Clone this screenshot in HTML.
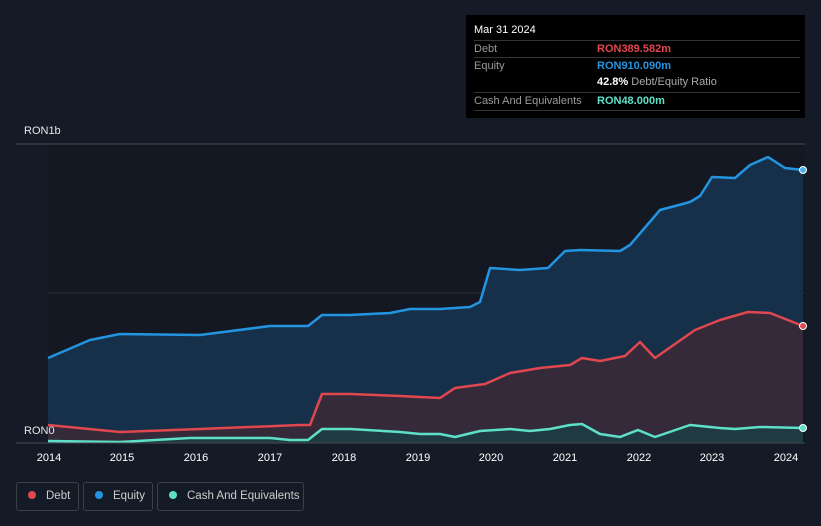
<!DOCTYPE html>
<html><head><style>
html,body{margin:0;width:821px;height:526px;background:#151b26;font-family:"Liberation Sans",sans-serif;overflow:hidden;position:relative}
.tip{position:absolute;left:466px;top:15px;width:339px;height:103px;background:#000;color:#fff;font-size:11px}
.row{position:absolute;left:8px;width:326px;border-top:1px solid #333;height:17px;line-height:17px}
.row span.l{color:#9a9a9a;position:absolute;left:0}
.row span.v{position:absolute;left:123px;white-space:nowrap}
.leg{position:absolute;top:482px;height:29px;border:1px solid #3a404a;border-radius:3px;color:#ccc;font-size:11.5px;line-height:27px;box-sizing:border-box;white-space:nowrap}
.leg i{display:inline-block;width:8px;height:8px;border-radius:50%;margin:0 10px 0 11px;vertical-align:0}
</style></head><body>
<svg width="821" height="526" style="position:absolute;left:0;top:0">
<rect x="48" y="144" width="757" height="299" fill="#131822"/>
<line x1="16" y1="144" x2="805" y2="144" stroke="#444a55"/>
<line x1="48" y1="293" x2="805" y2="293" stroke="#2a303a"/>
<path d="M48,358 L90,340 L120,334 L200,335 L270,326 L308,326 L322,315 L350,315 L390,313 L410,309 L440,309 L470,307 L480,302 L490,268 L520,270 L548,268 L565,251 L580,250 L620,251 L630,245 L660,210 L690,202 L700,196 L712,177 L735,178 L750,165 L768,157 L785,168 L803,170 L803,443 L48,443Z" fill="#17304a"/>
<path d="M48,425 L120,432 L200,429 L300,425 L310,425 L322,394 L350,394 L400,396 L440,398 L455,388 L485,384 L510,373 L540,368 L570,365 L582,358 L600,361 L625,356 L640,342 L655,358 L695,330 L720,320 L748,312 L770,313 L803,326 L803,443 L48,443Z" fill="#342a3a"/>
<path d="M48,441 L120,442 L190,438 L270,438 L290,440 L308,440 L322,429 L350,429 L400,432 L420,434 L440,434 L455,437 L480,431 L510,429 L530,431 L550,429 L570,425 L582,424 L600,434 L620,437 L638,430 L655,437 L690,425 L720,428 L735,429 L760,427 L803,428 L803,443 L48,443Z" fill="#1f3a40"/>
<g fill="none" stroke-width="2.5" stroke-linejoin="round">
<path d="M48,358 L90,340 L120,334 L200,335 L270,326 L308,326 L322,315 L350,315 L390,313 L410,309 L440,309 L470,307 L480,302 L490,268 L520,270 L548,268 L565,251 L580,250 L620,251 L630,245 L660,210 L690,202 L700,196 L712,177 L735,178 L750,165 L768,157 L785,168 L803,170" stroke="#2394e0"/>
<path d="M48,425 L120,432 L200,429 L300,425 L310,425 L322,394 L350,394 L400,396 L440,398 L455,388 L485,384 L510,373 L540,368 L570,365 L582,358 L600,361 L625,356 L640,342 L655,358 L695,330 L720,320 L748,312 L770,313 L803,326" stroke="#e0474f"/>
<path d="M48,441 L120,442 L190,438 L270,438 L290,440 L308,440 L322,429 L350,429 L400,432 L420,434 L440,434 L455,437 L480,431 L510,429 L530,431 L550,429 L570,425 L582,424 L600,434 L620,437 L638,430 L655,437 L690,425 L720,428 L735,429 L760,427 L803,428" stroke="#5ee0c8"/>
</g>
<line x1="16" y1="443" x2="805" y2="443" stroke="#444a55"/>
<circle cx="803" cy="170" r="3.5" fill="#4fb0f0" stroke="#fff" stroke-width="1"/>
<circle cx="803" cy="326" r="3.5" fill="#e0474f" stroke="#fff" stroke-width="1"/>
<circle cx="803" cy="428" r="3.5" fill="#5ee0c8" stroke="#fff" stroke-width="1"/>
<g fill="#fff" font-size="11" font-family="Liberation Sans" text-anchor="middle">
<text x="49" y="461">2014</text><text x="122" y="461">2015</text><text x="196" y="461">2016</text><text x="270" y="461">2017</text><text x="344" y="461">2018</text><text x="418" y="461">2019</text><text x="491" y="461">2020</text><text x="565" y="461">2021</text><text x="639" y="461">2022</text><text x="712" y="461">2023</text><text x="786" y="461">2024</text>
</g>
<text x="24" y="134" fill="#e6e6e6" font-size="11" font-family="Liberation Sans">RON1b</text>
<text x="24" y="434" fill="#e6e6e6" font-size="11" font-family="Liberation Sans">RON0</text>
</svg>
<div class="tip">
<div style="position:absolute;left:8px;top:9px;font-size:11px">Mar 31 2024</div>
<div class="row" style="top:25px"><span class="l">Debt</span><span class="v" style="color:#e0474f;font-weight:bold">RON389.582m</span></div>
<div class="row" style="top:42px"><span class="l">Equity</span><span class="v" style="color:#2394e0;font-weight:bold">RON910.090m</span></div>
<div class="row" style="top:59px;border-top:none"><span class="v"><b>42.8%</b> <span style="color:#aaa">Debt/Equity Ratio</span></span></div>
<div class="row" style="top:77px;border-bottom:1px solid #333"><span class="l">Cash And Equivalents</span><span class="v" style="color:#5ee0c8;font-weight:bold">RON48.000m</span></div>
</div>
<div class="leg" style="left:16px;width:63px"><i style="background:#e0474f"></i>Debt</div>
<div class="leg" style="left:83px;width:70px"><i style="background:#2394e0"></i>Equity</div>
<div class="leg" style="left:157px;width:147px"><i style="background:#5ee0c8"></i>Cash And Equivalents</div>
</body></html>
